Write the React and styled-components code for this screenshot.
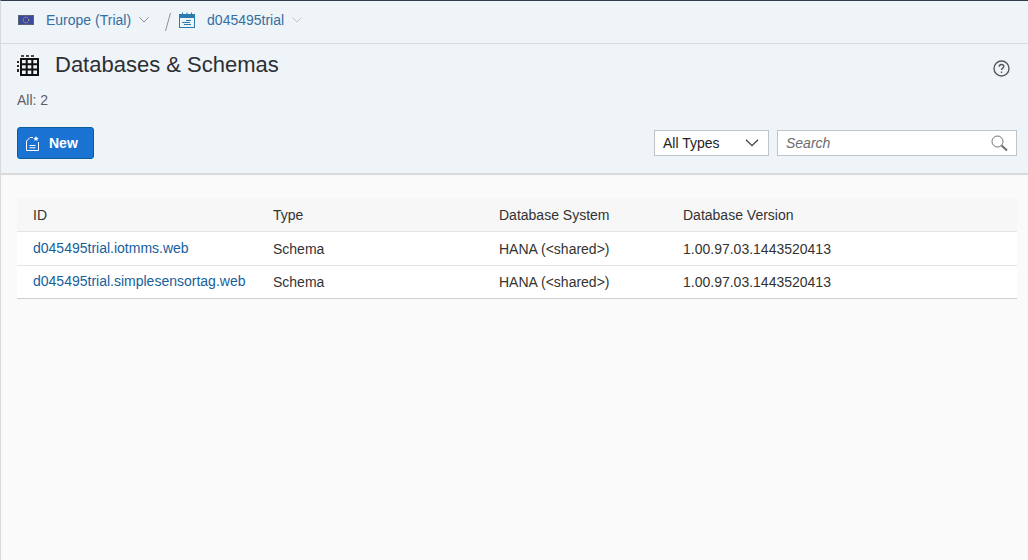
import React from 'react';
import styled, { createGlobalStyle } from 'styled-components';

const GlobalStyle = createGlobalStyle`
  html, body {
    margin: 0;
    padding: 0;
    background: #fafafa;
    font-family: 'Liberation Sans', Arial, sans-serif;
  }
`;

const Page = styled.div`
  width: 1028px;
  height: 560px;
  box-sizing: border-box;
  overflow: hidden;
  border-top: 1px solid #2f3c4b;
  border-left: 1px solid #d9d9d9;
  background: #fafafa;
`;

const Breadcrumbs = styled.div`
  height: 43px;
  box-sizing: border-box;
  display: flex;
  align-items: center;
  padding: 0 0 4px 17px;
  background: #eff4f9;
  border-bottom: 1px solid #d8dadc;
  font-size: 14px;
  color: #346f9f;
`;

const CrumbLabel = styled.span`
  margin-left: ${(p) => p.$gap}px;
`;

const Chevron = styled.svg`
  width: 10px;
  height: 6px;
  margin-left: 8px;
  fill: none;
  stroke: ${(p) => p.$color};
  stroke-width: 1;
`;

const SelectChevron = styled(Chevron)`
  width: 14px;
  height: 8px;
  margin-right: 1px;
`;

const Slash = styled.svg`
  width: 6px;
  height: 20px;
  margin: 3px 0 0 16px;
  stroke: #8d9298;
  stroke-width: 1;
`;

const Header = styled.div`
  height: 131px;
  box-sizing: border-box;
  background: #eff4f9;
  border-bottom: 2px solid #d9dadc;
  padding: 9px 11px 0 16px;
`;

const TitleRow = styled.div`
  display: flex;
  align-items: center;
  height: 24px;
  padding-right: 7px;
`;

const Title = styled.h1`
  margin: 0 0 0 16px;
  font-size: 22px;
  font-weight: 400;
  color: #2c2f33;
  flex: 1;
`;

const HelpWrap = styled.span`
  display: flex;
  margin-top: 7px;
`;

const Count = styled.div`
  margin-top: 15px;
  font-size: 14px;
  line-height: 16px;
  color: #5c5f63;
`;

const Toolbar = styled.div`
  display: flex;
  align-items: center;
  margin-top: 19px;
`;

const NewButton = styled.button`
  width: 77px;
  height: 32px;
  box-sizing: border-box;
  display: flex;
  align-items: center;
  padding: 0 0 0 8px;
  border: 1px solid #0a5d97;
  border-radius: 3px;
  background: #1a73d2;
  color: #fff;
  font: 700 14px 'Liberation Sans', Arial, sans-serif;
`;

const NewIconWrap = styled.span`
  display: flex;
  margin-right: 10px;
`;

const Spacer = styled.div`
  flex: 1;
`;

const Field = styled.div`
  height: 26px;
  box-sizing: border-box;
  width: ${(p) => p.$width}px;
  margin-left: ${(p) => p.$gap || 0}px;
  display: flex;
  align-items: center;
  justify-content: space-between;
  padding: 0 8px;
  background: #fff;
  border: 1px solid #bfc4c9;
  font-size: 14px;
  color: #222;
`;

const Placeholder = styled.span`
  font-style: italic;
  color: #6a6d70;
`;

const Content = styled.div`
  padding: 23px 11px 0 16px;
`;

const Table = styled.div`
  background: #fff;
  border-bottom: 1px solid #cfcfcf;
`;

const Row = styled.div`
  display: grid;
  grid-template-columns: 240px 226px 184px 1fr;
  align-items: center;
  height: ${(p) => p.$height}px;
  box-sizing: border-box;
  padding-left: 16px;
  font-size: 14px;
  color: #333;
  background: ${(p) => (p.$head ? '#f7f7f7' : '#fff')};
  border-bottom: ${(p) => (p.$last ? 'none' : '1px solid #e4e4e4')};
`;

const IdLink = styled.a`
  color: #17609c;
  text-decoration: none;
  margin-top: -2px;
`;

const FlagIcon = () => (
  <svg width="16" height="10" viewBox="0 0 16 10">
    <rect x="0.5" y="0.5" width="15" height="9" fill="#3d4a9c" stroke="#5a6378" strokeWidth="1" />
    <circle cx="8" cy="5" r="2.8" fill="none" stroke="#d9c94a" strokeWidth="1" strokeDasharray="1 1" />
  </svg>
);

const CalendarIcon = () => (
  <svg width="16" height="16" viewBox="0 0 16 16" fill="none" stroke="#2b7bb0" strokeWidth="1" style={{ marginLeft: 8 }}>
    <rect x="0.5" y="2.5" width="15" height="13" />
    <path d="M0.5 3h15v2.5H0.5z" fill="#2b7bb0" />
    <path d="M3.5 0.5v3M8 0.5v3M12.5 0.5v3" />
    <path d="M7 8.5h5M3 10.5h8M5 12.5h7" />
  </svg>
);

const GridIcon = () => (
  <svg width="22" height="22" viewBox="0 0 22 22" fill="none" stroke="#111">
    <path d="M4 2h3M9 2h3M14 2h3" strokeWidth="1.6" />
    <path d="M1 7v2M1 11v2M1 15v3" strokeWidth="1.8" />
    <rect x="4" y="5" width="17" height="16" strokeWidth="2" />
    <path d="M9.7 5V21M15.3 5V21M4 10.3h17M4 15.6h17" strokeWidth="2" />
  </svg>
);

const HelpIcon = () => (
  <svg width="17" height="17" viewBox="0 0 17 17" fill="none" stroke="#55585c" strokeWidth="1.4">
    <circle cx="8.5" cy="8.5" r="7.5" />
    <path d="M6.2 6.7c0-1.4 1-2.2 2.3-2.2s2.3.8 2.3 2c0 1.6-2.3 1.7-2.3 3.6" />
    <path d="M8.5 11.5v1.5" />
  </svg>
);

const NewIcon = () => (
  <svg width="13" height="15" viewBox="0 0 13 15" fill="none" stroke="#fff" strokeWidth="1">
    <path d="M7 1.5H4L0.5 5v9.5h12V6" />
    <path d="M3.5 9.5h6M3.5 11.8h6" />
    <path d="M10 0l0.8 1.8 1.9.2-1.4 1.2.4 1.9-1.7-1-1.7 1 .4-1.9-1.4-1.2 1.9-.2z" fill="#fff" stroke="none" />
  </svg>
);

const SearchIcon = () => (
  <svg width="17" height="17" viewBox="0 0 17 17" fill="none" stroke="#6c6f72">
    <circle cx="6.5" cy="6.5" r="5.5" strokeWidth="1" />
    <path d="M10.5 10.5L16 15.5" strokeWidth="2" />
  </svg>
);

const rows = [
  { id: 'd045495trial.iotmms.web', type: 'Schema', system: 'HANA (<shared>)', version: '1.00.97.03.1443520413' },
  { id: 'd045495trial.simplesensortag.web', type: 'Schema', system: 'HANA (<shared>)', version: '1.00.97.03.1443520413' },
];

function App() {
  return (
    <Page>
      <GlobalStyle />
      <Breadcrumbs>
        <FlagIcon />
        <CrumbLabel $gap={12}>Europe (Trial)</CrumbLabel>
        <Chevron $color="#8b8f94" viewBox="0 0 10 6"><path d="M0.5 0.5L5 5l4.5-4.5" /></Chevron>
        <Slash viewBox="0 0 6 20"><path d="M5.5 1L0.5 19" /></Slash>
        <CalendarIcon />
        <CrumbLabel $gap={12}>d045495trial</CrumbLabel>
        <Chevron $color="#c3c7cb" viewBox="0 0 10 6"><path d="M0.5 0.5L5 5l4.5-4.5" /></Chevron>
      </Breadcrumbs>
      <Header>
        <TitleRow>
          <GridIcon />
          <Title>Databases &amp; Schemas</Title>
          <HelpWrap><HelpIcon /></HelpWrap>
        </TitleRow>
        <Count>All: 2</Count>
        <Toolbar>
          <NewButton>
            <NewIconWrap><NewIcon /></NewIconWrap>
            New
          </NewButton>
          <Spacer />
          <Field $width={115}>
            All Types
            <SelectChevron $color="#444" viewBox="0 0 10 6">
              <path d="M0.5 0.5L5 5l4.5-4.5" />
            </SelectChevron>
          </Field>
          <Field $width={240} $gap={8}>
            <Placeholder>Search</Placeholder>
            <SearchIcon />
          </Field>
        </Toolbar>
      </Header>
      <Content>
        <Table>
          <Row $head $height={34}>
            <span>ID</span>
            <span>Type</span>
            <span>Database System</span>
            <span>Database Version</span>
          </Row>
          {rows.map((r, i) => (
            <Row key={r.id} $height={i === rows.length - 1 ? 32 : 34} $last={i === rows.length - 1}>
              <IdLink>{r.id}</IdLink>
              <span>{r.type}</span>
              <span>{r.system}</span>
              <span>{r.version}</span>
            </Row>
          ))}
        </Table>
      </Content>
    </Page>
  );
}

export default App;
